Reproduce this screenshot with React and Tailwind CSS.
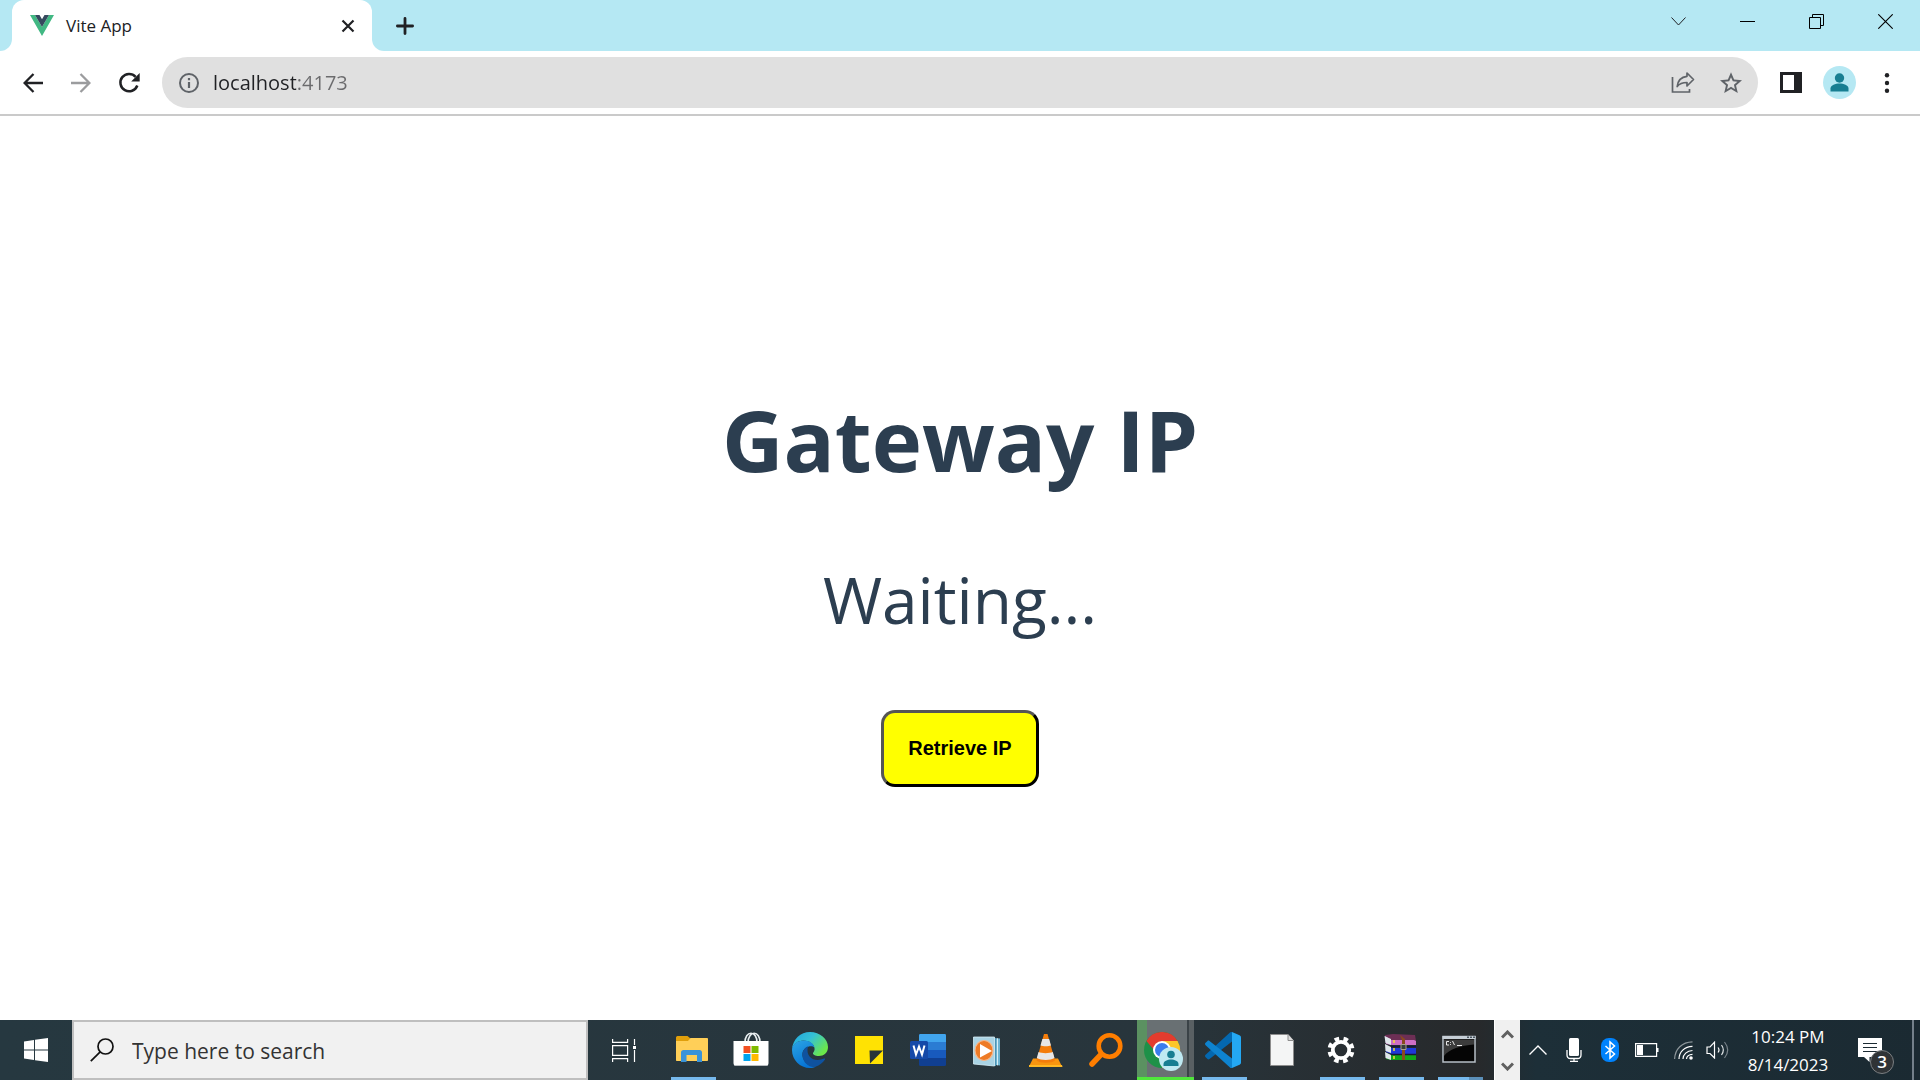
import React from "react";

function VueLogo() {
  return (
    <svg width="24" height="21" viewBox="0 0 24 21" aria-hidden="true">
      <path d="M0 0h5l7 12 7-12h5L12 21z" fill="#41b883" />
      <path d="M5 0h4.500L12 4.200 14.500 0H19l-7 12z" fill="#35495e" />
    </svg>
  );
}

function TabStrip() {
  return (
    <header className="flex h-[51px] bg-[#b5e8f3]">
      <div className="flex w-3 bg-white">
        <div className="h-full w-full rounded-br-xl bg-[#b5e8f3]" />
      </div>
      <div className="flex w-[360px] items-center rounded-t-xl bg-white pl-[18px] pr-3">
        <VueLogo />
        <span className="ml-3 flex-1 text-[17px] leading-6 text-[#202124]">Vite App</span>
        <button aria-label="Close tab" className="flex h-6 w-6 items-center justify-center">
          <svg width="14" height="14" viewBox="0 0 14 14" stroke="#202124" strokeWidth="2.200">
            <path d="M1.500 1.500l11 11M12.500 1.500l-11 11" />
          </svg>
        </button>
      </div>
      <div className="flex w-3 bg-white">
        <div className="h-full w-full rounded-bl-xl bg-[#b5e8f3]" />
      </div>
      <button aria-label="New tab" className="flex w-[42px] items-center justify-center">
        <svg width="18" height="18" viewBox="0 0 18 18" stroke="#202124" strokeWidth="2.800" strokeLinecap="round">
          <path d="M9 1.400v15.200M1.400 9h15.200" />
        </svg>
      </button>
      <div className="ml-auto flex h-[43px]">
        <button aria-label="Search tabs" className="flex w-[69px] items-center justify-center">
          <svg width="15" height="9" viewBox="0 0 15 9" fill="none" stroke="#202124">
            <path d="M.5.5l7 7.500 7-7.500" />
          </svg>
        </button>
        <button aria-label="Minimize" className="flex w-[69px] items-center justify-center">
          <svg width="15" height="1" viewBox="0 0 15 1"><path d="M0 0h15v1H0z" fill="#000" /></svg>
        </button>
        <button aria-label="Restore" className="flex w-[69px] items-center justify-center">
          <svg width="15" height="15" viewBox="0 0 15 15" fill="none" stroke="#000">
            <path d="M.5 3.500h11v11H.5zM3.500 3.500v-3h11v11h-3" />
          </svg>
        </button>
        <button aria-label="Close" className="flex w-[69px] items-center justify-center">
          <svg width="15" height="15" viewBox="0 0 15 15" stroke="#000" strokeWidth="1.100">
            <path d="M.3.3l14.400 14.400M14.700.3L.3 14.700" />
          </svg>
        </button>
      </div>
    </header>
  );
}

function ToolButton({ label, children }) {
  return (
    <button aria-label={label} className="flex h-12 w-12 shrink-0 items-center justify-center">
      {children}
    </button>
  );
}

function Toolbar() {
  return (
    <div className="flex h-[65px] items-center border-b-2 border-[#cacaca] bg-white px-[9px]">
      <ToolButton label="Back">
        <svg width="20" height="20" viewBox="0 0 20 20" fill="none" stroke="#202124" strokeWidth="2.300">
          <path d="M20 10H2M10.500 1L1.600 10l8.900 9" />
        </svg>
      </ToolButton>
      <ToolButton label="Forward">
        <svg width="20" height="20" viewBox="0 0 20 20" fill="none" stroke="#9b9c9e" strokeWidth="2.300">
          <path d="M0 10h18M9.500 1l8.900 9-8.900 9" />
        </svg>
      </ToolButton>
      <ToolButton label="Reload">
        <svg width="22" height="22" viewBox="0 0 22 22">
          <path d="M19.300 13.500A8.700 8.700 0 1 1 17.600 4.800" fill="none" stroke="#202124" strokeWidth="2.500" />
          <path d="M21.700 1v8.500h-8.500z" fill="#202124" />
        </svg>
      </ToolButton>
      <div className="ml-[9px] mr-[9px] flex h-[51px] flex-1 items-center rounded-full bg-[#e0e0e0] pl-[17px] pr-[3px]">
        <button aria-label="View site information" className="flex w-5 justify-center">
          <svg width="20" height="20" viewBox="0 0 20 20" className="shrink-0">
            <circle cx="10" cy="10" r="9" fill="none" stroke="#5f6368" strokeWidth="2" />
            <path d="M8.900 9h2.200v6H8.900zM8.900 5h2.200v2.200H8.900z" fill="#5f6368" />
          </svg>
        </button>
        <input
          aria-label="Address"
          defaultValue="localhost:4173"
          className="ml-[14px] min-w-0 flex-1 bg-[linear-gradient(90deg,#202124_83px,#6b6b6d_83px)] bg-clip-text text-[20px] leading-7 text-transparent caret-black outline-none"
        />
        <ToolButton label="Share">
          <svg width="24" height="23" viewBox="0 0 24 23" fill="none" stroke="#5f6368" strokeWidth="1.700">
            <path d="M1.500 6v15h17v-3" />
            <path d="M16 2l6.500 6.500L16 15v-3.500c-4.500 0-7.500 1-9.800 4C6.800 10 9.500 6 16 5.300z" strokeLinejoin="round" />
          </svg>
        </ToolButton>
        <ToolButton label="Bookmark this tab">
          <svg width="22" height="22" viewBox="0 0 24 24" fill="#5f6368">
            <path d="M24 9l-8.600-.7L12 .4 8.600 8.300 0 9l6.500 5.700L4.600 23 12 18.600 19.400 23l-1.900-8.300zM12 16.200l-4.300 2.600 1.100-4.900-3.800-3.300 5-.4L12 5.600l2 4.600 5 .4-3.800 3.300 1.100 4.900z" />
          </svg>
        </ToolButton>
      </div>
      <ToolButton label="Side panel">
        <svg width="22" height="21" viewBox="0 0 22 21">
          <path d="M0 0h22v21H0z" fill="#202124" />
          <path d="M3 3h11v15H3z" fill="#fff" />
        </svg>
      </ToolButton>
      <ToolButton label="Profile">
        <svg width="33" height="33" viewBox="0 0 33 33">
          <circle cx="16.500" cy="16.500" r="16.500" fill="#b5e8f3" />
          <circle cx="16.500" cy="12" r="4.700" fill="#177e92" />
          <path d="M7.500 25.500v-3c0-3.500 5-5 9-5s9 1.500 9 5v3z" fill="#177e92" />
        </svg>
      </ToolButton>
      <ToolButton label="Menu">
        <svg width="6" height="20" viewBox="0 0 6 20" fill="#202124">
          <circle cx="3" cy="2.300" r="2.200" />
          <circle cx="3" cy="10" r="2.200" />
          <circle cx="3" cy="17.700" r="2.200" />
        </svg>
      </ToolButton>
    </div>
  );
}

const FolderIcon = () => (
  <svg width="36" height="36" viewBox="0 0 36 36">
    <path d="M2 5.500C2 4.500 3 4 4 4h9.500l3 2.500-2 3.500H2z" fill="#e09f0b" />
    <path d="M2 9h12l2.500-3H33c.6 0 1 .5 1 1v21c0 .6-.4 1-1 1H3c-.6 0-1-.4-1-1z" fill="#ffcf58" />
    <path d="M7 30V20.500c0-1.200 1-2.500 2.500-2.500h16c1.500 0 2.500 1.300 2.500 2.500V30h-5v-7H12.500v7z" fill="#3a93d8" />
  </svg>
);
const StoreIcon = () => (
  <svg width="36" height="36" viewBox="0 0 36 36">
    <path d="M12 11c-.5-13 12.500-13 12 0M15 11c0-13 12.500-13 12 0" fill="none" stroke="#e9eef0" strokeWidth="1.600" />
    <path d="M.5 9h35v22c0 2-1 3-3 3h-29c-2 0-3-1-3-3z" fill="#fff" />
    <path d="M1.500 33.500h33" stroke="#b9bec1" />
    <path d="M10.500 14h7v7h-7z" fill="#f25022" />
    <path d="M18.500 14h7v7h-7z" fill="#7fba00" />
    <path d="M10.500 22h7v7h-7z" fill="#00a4ef" />
    <path d="M18.500 22h7v7h-7z" fill="#ffb900" />
  </svg>
);
const EdgeIcon = () => (
  <svg width="36" height="36" viewBox="0 0 36 36">
    <defs>
      <linearGradient id="edgeTop" x1="0" y1="0" x2="1" y2="0.600">
        <stop offset="0" stopColor="#1fa5df" />
        <stop offset="0.500" stopColor="#35c1d6" />
        <stop offset="1" stopColor="#6be84a" />
      </linearGradient>
      <linearGradient id="edgeLeft" x1="0" y1="0" x2="0.500" y2="1">
        <stop offset="0" stopColor="#2ba5e5" />
        <stop offset="1" stopColor="#0673d4" />
      </linearGradient>
    </defs>
    <path d="M0 17C1 7 8.500 0 18 0c10 0 18 7 18 15 0 6-4.500 9-9 9-4 0-6.500-1.500-6-3 1-1.500 1.600-2.500 1.600-4C22.500 12 17 8.500 11.500 8.500 6 8.500 1.500 12 0 17z" fill="url(#edgeTop)" />
    <path d="M0 18C0 12.500 5.500 8.500 11.500 8.500c5.500 0 10 2.500 11 7C20 13 12 14 10.500 21c-1 7 5 13.500 13.500 13.800C22 35.700 20 36 18 36 8 36 0 28 0 18z" fill="url(#edgeLeft)" />
    <path d="M16 14.200c-4 1.800-6 6-5.500 10C11.200 30.500 17 36 23.500 34.800c4-1.300 7.500-4.300 9.500-7.300.4-.8-.3-1.200-1-.9C23.500 30.500 13 26 16 14.200z" fill="#0f529f" />
  </svg>
);
const StickyIcon = () => (
  <svg width="36" height="36" viewBox="0 0 36 36">
    <path d="M4 4h28v14L18 32H4z" fill="#ffe203" />
    <path d="M4 4h28v28H4z" fill="#ffe203" />
    <path d="M18.500 18.500H32L19 31.500z" fill="#27343a" />
  </svg>
);
const WordIcon = () => (
  <svg width="36" height="36" viewBox="0 0 36 36">
    <rect x="9" y="2" width="27" height="32" rx="1.500" fill="#103f91" />
    <path d="M9 3.500C9 2.500 9.500 2 10.500 2h24c1 0 1.500.5 1.500 1.500V10H9z" fill="#41a5ee" />
    <path d="M9 10h27v8H9z" fill="#2b7cd3" />
    <path d="M9 18h27v8H9z" fill="#185abd" />
    <rect x="0" y="9" width="18" height="18" rx="1.500" fill="#1549a8" />
    <path d="M3.500 13.500l2.500 9 3-8 3 8 2.500-9" fill="none" stroke="#fff" strokeWidth="2" />
  </svg>
);
const PlayerIcon = () => (
  <svg width="36" height="36" viewBox="0 0 36 36">
    <path d="M10 5l21 1.500v27L10 31z" fill="#6db2cf" />
    <path d="M8 5l19 1v28L8 32z" fill="#4c93b5" />
    <path d="M4.500 5H25.500v29L4.500 32z" fill="#a9d3e4" stroke="#d7edf5" strokeWidth=".8" />
    <path d="M28.500 6.300v27" stroke="#d7edf5" strokeWidth="1" />
    <ellipse cx="15" cy="18.500" rx="9" ry="10" fill="#ee7b26" stroke="#f7b78a" strokeWidth="1.200" />
    <path d="M11 12v13.500l12-6.500z" fill="#fff" />
  </svg>
);
const VlcIcon = () => (
  <svg width="36" height="36" viewBox="0 0 36 36">
    <path d="M5 26.500h25l4 8H1z" fill="#f9950f" />
    <path d="M1 33h33l.5 2H1z" fill="#ffb824" />
    <path d="M16 2h3.500L27 28.500c-3 3-15 3-18.500 0z" fill="#f47d0b" />
    <path d="M14.400 7h6.700l1.900 6.500c-2.500 1-8 1-10.500 0z" fill="#e7e7e7" />
    <path d="M10.500 20c3 1.500 11 1.500 14.300 0l1.700 6c-4 2.500-13.500 2.500-17.700 0z" fill="#e7e7e7" />
  </svg>
);
const MagnifierIcon = () => (
  <svg width="36" height="36" viewBox="0 0 36 36" fill="none" stroke="#ff7e00">
    <circle cx="22.500" cy="14" r="10.800" strokeWidth="4.600" />
    <path d="M14 22.500L5 32" strokeWidth="5.500" strokeLinecap="round" />
  </svg>
);
const ChromeIcon = () => (
  <svg width="40" height="40" viewBox="0 0 40 40" className="mt-1">
    <circle cx="18" cy="18" r="18" fill="#1e9148" />
    <path d="M2.400 9A18 18 0 0 1 33.600 9L26 18H10z" fill="#e33b2e" />
    <path d="M18 9h15.600A18 18 0 0 1 18 36l8-13.500z" fill="#fcc629" />
    <circle cx="18" cy="18" r="9" fill="#fff" />
    <circle cx="18" cy="18" r="7" fill="#3b7ded" />
    <circle cx="27" cy="27" r="12" fill="#bfe9f2" />
    <circle cx="27" cy="22.500" r="3.800" fill="#177e92" />
    <path d="M19.500 34v-2c0-3 4-4.500 7.500-4.500s7.500 1.500 7.500 4.500v2z" fill="#177e92" />
  </svg>
);
const CodeIcon = () => (
  <svg width="36" height="36" viewBox="0 0 36 36">
    <path d="M27 0v9.500L4.500 27c-.8.600-1.500.5-2 0L.6 25.200c-.8-.8-.8-1.700 0-2.400L25 .6C25.600 0 26.300-.2 27 0z" fill="#0468b0" />
    <path d="M27 36v-9.500L4.500 9c-.8-.6-1.500-.5-2 0L.6 10.800c-.8.800-.8 1.700 0 2.400L25 35.400c.6.600 1.300.8 2 .6z" fill="#0e83cf" />
    <path d="M27 0l7.500 3.300c1 .5 1.500 1.200 1.500 2.200v25c0 1-.5 1.700-1.500 2.200L27 36z" fill="#24a8f3" />
  </svg>
);
const FileIcon = () => (
  <svg width="36" height="36" viewBox="0 0 36 36">
    <path d="M6.500 2.500h17.500l5.500 6v25h-23z" fill="#f4f5f5" stroke="#8d8d8d" />
    <path d="M24 2.500v6h5.500" fill="#dcdcdc" stroke="#8d8d8d" />
  </svg>
);
const GearIcon = () => (
  <svg width="36" height="36" viewBox="0 0 36 36" fill="none" stroke="#fff">
    <circle cx="18" cy="18" r="8.200" strokeWidth="3.800" />
    <circle cx="18" cy="18" r="11.400" strokeWidth="4.200" strokeDasharray="4.500 4.454" strokeDashoffset="-2.200" />
  </svg>
);
const RarIcon = () => (
  <svg width="36" height="36" viewBox="0 0 36 36">
    <path d="M3 3l8-1 22 1 1 6-28 2z" fill="#6d2f55" />
    <path d="M3 4l6 4h23l2 1v4H10L4 12z" fill="#cf6fc4" />
    <path d="M4 14l5 2h25v6H10l-6-2z" fill="#1f38d8" />
    <path d="M4 21l5 2h25v5H10l-6-1z" fill="#10a818" />
    <path d="M2.500 4L9 7v6l-5.500-2zM3 12l6 3v6l-5.500-2zM3 20l6 3v5l-5.500-2z" fill="#dfe6ea" />
    <path d="M9 14.500h25M9 22.500h25" stroke="#15173a" strokeWidth="1.500" />
    <path d="M12 8v19" stroke="#f3df3b" strokeDasharray="3 5" strokeWidth="1.500" />
    <path d="M18 3l5 4v21h-3V8z" fill="#8a4a1d" />
    <path d="M19 12.500h5v5h-5z" fill="#3b3b3b" stroke="#a8a08a" />
  </svg>
);
const TerminalIcon = () => (
  <svg width="36" height="36" viewBox="0 0 36 36">
    <path d="M2 4.500h32v25.500H2z" fill="#050505" stroke="#b7bfc6" strokeWidth="1.500" />
    <path d="M1.500 4h33v3h-33z" fill="#c6ced6" />
    <path d="M26 4.500h2V6h-2zM29 4.500h2V6h-2zM32 4.500h2V6h-2z" fill="#4b5660" />
    <path d="M3 7.500h30v5C20 13.500 8 17 3 24z" fill="#3b3b3b" />
    <path d="M8 9.500H5.500V13H8M9.500 10v.8M9.500 12.200v.8M11.500 9l2 4M16 13.500h5" stroke="#e8e8e8" fill="none" />
  </svg>
);

const apps = [
  { name: "File Explorer", Icon: FolderIcon, open: true },
  { name: "Microsoft Store", Icon: StoreIcon },
  { name: "Microsoft Edge", Icon: EdgeIcon },
  { name: "Sticky Notes", Icon: StickyIcon },
  { name: "Word", Icon: WordIcon },
  { name: "Media Player", Icon: PlayerIcon },
  { name: "VLC", Icon: VlcIcon },
  { name: "Everything", Icon: MagnifierIcon },
  { name: "Chrome", Icon: ChromeIcon, active: true },
  { name: "Visual Studio Code", Icon: CodeIcon, open: true },
  { name: "Document", Icon: FileIcon },
  { name: "Settings", Icon: GearIcon, open: true },
  { name: "WinRAR", Icon: RarIcon, open: true },
  { name: "Command Prompt", Icon: TerminalIcon, open: true, stacked: true },
];

function AppButton({ app }) {
  const { name, Icon, open, active, stacked } = app;
  return (
    <button aria-label={name} className="relative flex h-full w-[59px] items-center justify-center pr-[3px]">
      {active && (
        <span className="absolute inset-y-0 left-px right-px flex border-b-[3px] border-[#50e63c]">
          <span className="w-[10px] bg-[#5b9161]" />
          <span className="flex-1 bg-[#697073]" />
          <span className="w-[2px] bg-[#3b4347]" />
          <span className="w-[5px] bg-[#596063]" />
        </span>
      )}
      <span className="relative">
        <Icon />
      </span>
      {open && (
        <span className="absolute bottom-0 left-[7px] right-[7px] flex h-[3px]">
          <span className="flex-1 bg-[#76b9ed]" />
          {stacked && <span className="w-[14px] bg-[#5b8fb8]" />}
        </span>
      )}
    </button>
  );
}

function Chevron({ up }) {
  return (
    <svg width="13" height="9" viewBox="0 0 13 9" fill="none" stroke="#606060" strokeWidth="3">
      <path d={up ? "M1 7.500L6.500 2 12 7.500" : "M1 1.500L6.500 7 12 1.500"} />
    </svg>
  );
}

function Tray() {
  return (
    <div className="flex h-full items-center text-white">
      <button aria-label="Show hidden icons" className="flex h-full w-9 items-center justify-center">
        <svg width="18" height="10" viewBox="0 0 18 10" fill="none" stroke="#fff" strokeWidth="1.400">
          <path d="M.5 9.500L9 1l8.500 8.500" />
        </svg>
      </button>
      <button aria-label="Microphone" className="flex h-full w-9 items-center justify-center">
        <svg width="16" height="24" viewBox="0 0 16 24" fill="none" stroke="#fff" strokeWidth="1.300">
          <rect x="3" y="0" width="10" height="18" rx="1.500" fill="#fff" stroke="none" />
          <path d="M1 12v5c0 2.500 1.500 3.500 3.500 3.500h7c2 0 3.500-1 3.500-3.500v-5M8 20.500v3M4 23.300h8" />
        </svg>
      </button>
      <button aria-label="Bluetooth" className="flex h-full w-9 items-center justify-center">
        <svg width="18" height="24" viewBox="0 0 18 24">
          <rect width="18" height="24" rx="8" fill="#0082fc" />
          <path d="M4.500 8l9 8L9 20V4l4.500 4-9 8" fill="none" stroke="#fff" strokeWidth="1.500" />
        </svg>
      </button>
      <button aria-label="Battery" className="flex h-full w-[38px] items-center justify-center">
        <svg width="24" height="14" viewBox="0 0 24 14">
          <path d="M.6.6h21v12.800H.6z" fill="none" stroke="#fff" strokeWidth="1.200" />
          <path d="M2 2h6v10H2zM22 5h1.500v4H22z" fill="#fff" />
        </svg>
      </button>
      <button aria-label="Wi-Fi" className="flex h-full w-[35px] items-center justify-center">
        <svg width="19" height="19" viewBox="0 0 19 19" fill="none" stroke="#fff" strokeWidth="1.200">
          <path d="M.6 18C1 8 8 1 18.500.8" stroke="#8e979b" />
          <path d="M5 18C5 11 10.500 5.500 18.500 5.300M9 18c0-4.500 4-8.300 9.500-8.500M12.500 18c0-2.500 2.500-4.500 6-4.700" />
          <circle cx="17" cy="17" r="1.800" fill="#fff" stroke="none" />
        </svg>
      </button>
      <button aria-label="Volume" className="flex h-full w-8 items-center justify-center">
        <svg width="23" height="18" viewBox="0 0 23 18" fill="none" stroke="#fff" strokeWidth="1.200">
          <path d="M1 6v6.500h3l4.500 4.500V1.200L4 6zM12 6.500c1.200 1.500 1.200 3.500 0 5" />
          <path d="M15.500 4c2.200 3 2.200 7 0 10" stroke="#dfe3e5" />
          <path d="M18.500 1c4 5 4 11 0 16" stroke="#78838a" />
        </svg>
      </button>
      <button className="flex h-full w-[110px] flex-col items-center justify-center pt-0.5 text-[17px] leading-7">
        <span>10:24 PM</span>
        <span>8/14/2023</span>
      </button>
      <button aria-label="Notifications, 3 new" className="relative ml-[15px] mr-[14px] flex h-full w-10 items-center">
        <svg width="24" height="24" viewBox="0 0 24 24">
          <path d="M0 0h24v19H11.500v5L6 19H0z" fill="#fff" />
          <path d="M5 5.500h14M5 9.500h14M5 13.500h14" stroke="#1c2b33" strokeWidth="1.200" />
        </svg>
        <span className="absolute bottom-[6px] left-3 flex h-6 w-6 items-center justify-center rounded-full border border-[#7b7f82] bg-[#2f3336] text-[17px] font-semibold leading-5">
          3
        </span>
      </button>
      <button aria-label="Show desktop" className="h-full w-2 border-l-2 border-[#74808a]" />
    </div>
  );
}

function Taskbar() {
  return (
    <footer className="flex h-[60px] items-center bg-[linear-gradient(90deg,#263840_0%,#28353c_60%,#27292b_77%,#1d2f38_80%,#1b2a32_100%)]">
      <button aria-label="Start" className="flex h-full w-[72px] items-center justify-center">
        <svg width="24" height="24" viewBox="0 0 24 24" fill="#fff">
          <path d="M0 3.400L10 2v9.500H0zM11 1.800L24 0v11.500H11zM0 12.500h10V22L0 20.600zM11 12.500h13V24l-13-1.800z" />
        </svg>
      </button>
      <label className="flex h-full w-[516px] items-center border-2 border-[#bfbfbf] bg-[#f1f1f1] pl-4">
        <svg width="24" height="24" viewBox="0 0 24 24" fill="none" stroke="#111" strokeWidth="1.700">
          <circle cx="15.500" cy="8.500" r="7.500" />
          <path d="M10.200 13.800L.8 23.200" />
        </svg>
        <input
          aria-label="Type here to search"
          placeholder="Type here to search"
          className="ml-[18px] min-w-0 flex-1 bg-transparent pt-0.5 text-[21px] leading-8 outline-none placeholder:text-[#333]"
        />
      </label>
      <button aria-label="Task view" className="flex h-full w-[72px] items-center justify-center">
        <svg width="25" height="23" viewBox="0 0 25 23" fill="none" stroke="#fff" strokeWidth="1.200">
          <path d="M.6 0v3.400h15V0M.6 6.600h15v9.800H.6zM.6 23v-3.400h15V23M22.500 0v6M22.500 11v12" />
          <path d="M21 7h3v3h-3z" fill="#fff" stroke="none" />
        </svg>
      </button>
      <nav aria-label="Applications" className="ml-1 flex h-full">
        {apps.map((app) => (
          <AppButton key={app.name} app={app} />
        ))}
      </nav>
      <div className="ml-auto flex h-full w-[26px] flex-col border-l border-white bg-[#f0f0f0]">
        <button aria-label="Scroll up" className="flex flex-1 items-center justify-center"><Chevron up /></button>
        <button aria-label="Scroll down" className="flex flex-1 items-center justify-center pt-1"><Chevron /></button>
      </div>
      <Tray />
    </footer>
  );
}

export default function App() {
  return (
    <div className='flex min-h-screen flex-col bg-white font-["Open_Sans","Noto_Sans",sans-serif]'>
      <TabStrip />
      <Toolbar />
      <main className="flex flex-1 flex-col items-center justify-center pt-5 text-[#2c3e50]">
        <h1 className="text-[85px] font-bold leading-[138px]">Gateway IP</h1>
        <p className="mt-10 text-[64px] leading-[104px]">Waiting...</p>
        <button className="mt-[58px] h-[77px] rounded-[14px] border-[3px] border-b-black border-l-[#555] border-r-black border-t-[#555] bg-[#ff0] px-6 font-['Liberation_Sans',Arial,sans-serif] text-[20px] font-bold leading-6 text-black">
          Retrieve IP
        </button>
      </main>
      <Taskbar />
    </div>
  );
}
